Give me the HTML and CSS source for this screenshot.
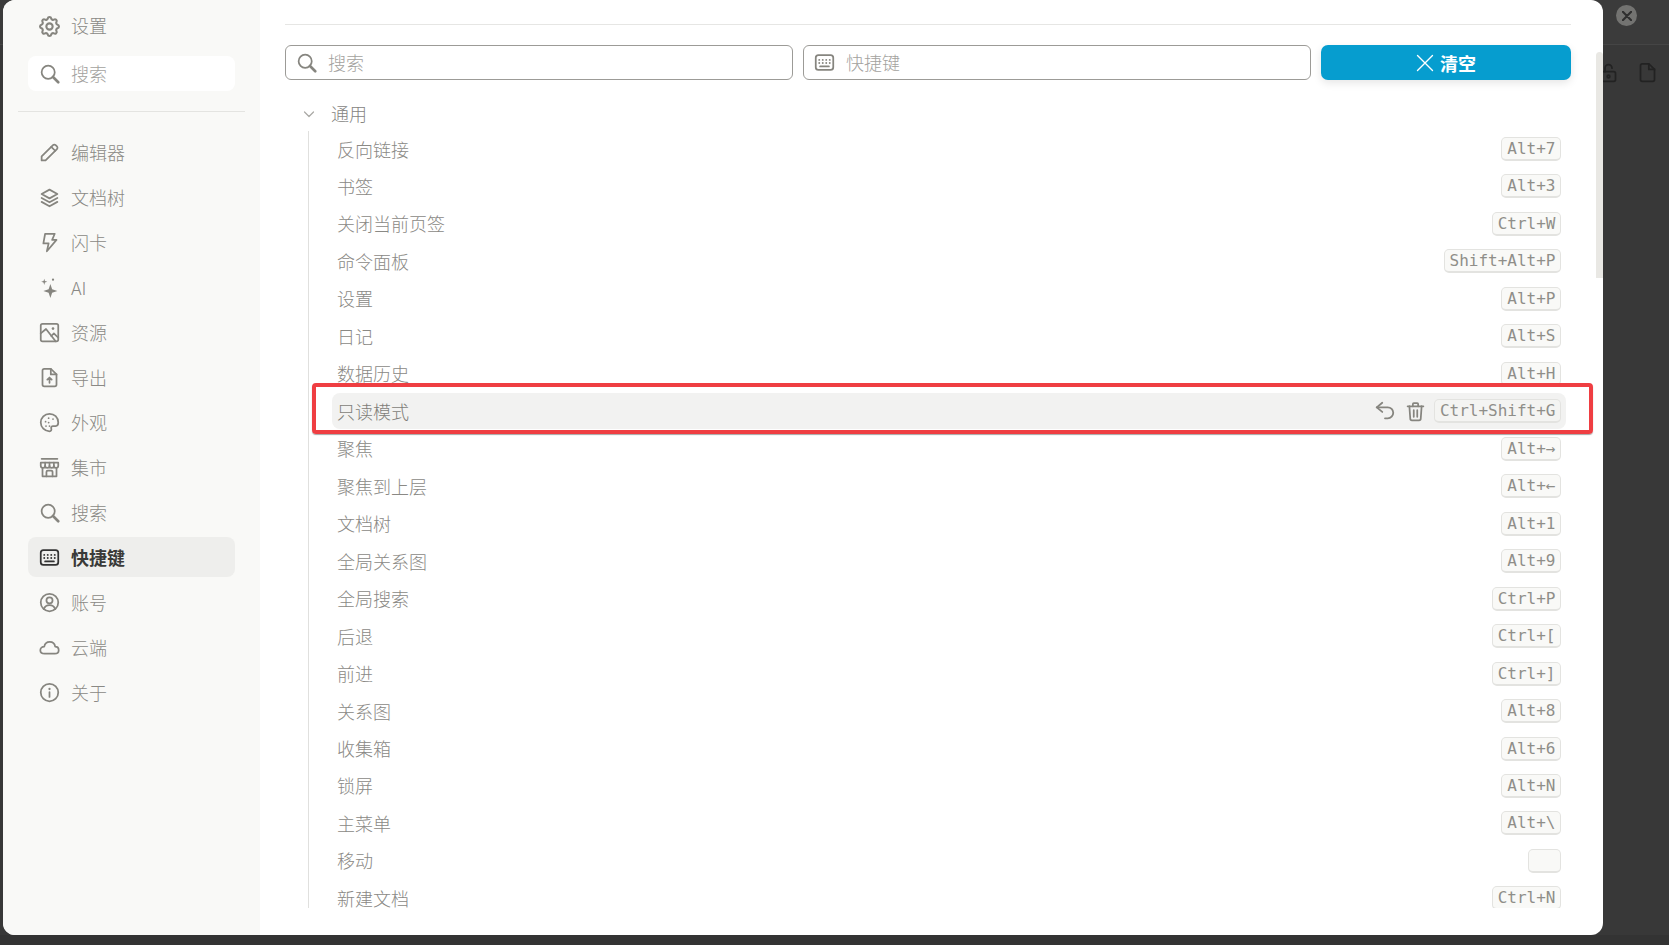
FILE: index.html
```html
<!DOCTYPE html>
<html lang="zh-CN">
<head>
<meta charset="utf-8">
<title>设置</title>
<link rel="stylesheet" href="styles.css">
</head>
<body>
<svg class="defs" width="0" height="0" aria-hidden="true">
  <symbol id="i-gear" viewBox="2 2 20 20"><path d="M10.325 4.317c.426-1.756 2.924-1.756 3.35 0a1.724 1.724 0 0 0 2.573 1.066c1.543-.94 3.31.826 2.37 2.37a1.724 1.724 0 0 0 1.065 2.572c1.756.426 1.756 2.924 0 3.35a1.724 1.724 0 0 0-1.066 2.573c.94 1.543-.826 3.31-2.37 2.37a1.724 1.724 0 0 0-2.572 1.065c-.426 1.756-2.924 1.756-3.35 0a1.724 1.724 0 0 0-2.573-1.066c-1.543.94-3.31-.826-2.37-2.37a1.724 1.724 0 0 0-1.065-2.572c-1.756-.426-1.756-2.924 0-3.35a1.724 1.724 0 0 0 1.066-2.573c-.94-1.543.826-3.31 2.37-2.37 1 .608 2.296.07 2.572-1.065z"/><circle cx="12" cy="12" r="3"/></symbol>
  <symbol id="i-search" viewBox="0 0 24 24"><circle cx="10.500" cy="10.500" r="7.500"/><path d="M16 16l6 6" stroke-width="3"/></symbol>
  <symbol id="i-pencil" viewBox="0 0 24 24"><path d="M3 21v-4.500L16 3.500a2.100 2.100 0 0 1 3 0l1.500 1.500a2.100 2.100 0 0 1 0 3L7.500 21z"/><path d="M14 5.500l4.500 4.500"/></symbol>
  <symbol id="i-layers" viewBox="0 0 24 24"><path d="M12 3L3 8l9 5 9-5z"/><path d="M3 12.500l9 5 9-5"/><path d="M3 17l9 5 9-5"/></symbol>
  <symbol id="i-bolt" viewBox="0 0 24 24"><path d="M7 2h11l-3 7h5L9 22l2-9H5z"/></symbol>
  <symbol id="i-sparkle" viewBox="0 0 24 24"><path class="solid" d="M13 8l2 6 6 2-6 2-2 6-2-6-6-2 6-2z"/><path class="solid" d="M6 2l.8 2.700L9.500 5.500 6.800 6.300 6 9l-.8-2.700L2.500 5.500l2.700-.8z"/><circle class="solid" cx="16" cy="3" r="1.300"/></symbol>
  <symbol id="i-image" viewBox="0 0 24 24"><rect x="2" y="2" width="20" height="20" rx="2"/><path d="M2 13l6-5 11 14"/><path d="M14 16l3-3 5 5"/><circle class="solid" cx="16" cy="7.500" r="1.500"/></symbol>
  <symbol id="i-export" viewBox="0 0 24 24"><path d="M13.500 2H6a2 2 0 0 0-2 2v16a2 2 0 0 0 2 2h12a2 2 0 0 0 2-2V8.500z"/><path d="M13.500 2v6.500H20"/><path d="M12 18v-6M9.500 14.500L12 12l2.500 2.500"/></symbol>
  <symbol id="i-palette" viewBox="0 0 24 24"><path d="M12 2a10 10 0 1 0 0 20c2 0 2.500-1.500 2-3-.5-1.500.5-3 2-3h3c2 0 3-1.500 3-4C22 6 17.500 2 12 2z"/><circle class="solid" cx="7.500" cy="11" r="1"/><circle class="solid" cx="11" cy="7" r="1"/><circle class="solid" cx="16" cy="8" r="1"/><circle class="solid" cx="11" cy="12" r="1"/><circle class="solid" cx="8" cy="16" r="1"/><circle class="solid" cx="12" cy="16" r="1"/></symbol>
  <symbol id="i-store" viewBox="0 0 24 24"><path d="M3 2h18"/><path d="M2 6.500h20v3.500a2.500 2.500 0 0 1-5 0 2.500 2.500 0 0 1-5 0 2.500 2.500 0 0 1-5 0 2.500 2.500 0 0 1-5 0z"/><path d="M7 6.500V10M12 6.500V10M17 6.500V10"/><path d="M4 13v9h16v-9"/><path d="M8.500 22v-5a1.500 1.500 0 0 1 1.500-1.500h4a1.500 1.500 0 0 1 1.500 1.500v5"/></symbol>
  <symbol id="i-keyboard" viewBox="0 0 24 24"><rect x="2" y="3.500" width="20" height="17" rx="3"/><path d="M6 9h.01M10 9h.01M14 9h.01M18 9h.01M6 12.500h.01M10 12.500h.01M14 12.500h.01M18 12.500h.01" stroke-width="2.200"/><path d="M7 16.500h10"/></symbol>
  <symbol id="i-user" viewBox="0 0 24 24"><circle cx="12" cy="12" r="10"/><circle cx="12" cy="9.500" r="3.500"/><path d="M5.500 19.500c1-3 3.500-4.500 6.500-4.500s5.500 1.500 6.500 4.500"/></symbol>
  <symbol id="i-cloud" viewBox="0 0 24 24"><path d="M6.500 19C3.500 19 1.500 17.200 1.500 15s2-4 4.500-4c.6-3.500 3.200-5.500 6.300-5.500 3.400 0 5.700 2.300 6.200 5.500 2.300 0 4 1.800 4 4s-1.700 4-4.500 4z"/></symbol>
  <symbol id="i-info" viewBox="0 0 24 24"><circle cx="12" cy="12" r="10"/><path d="M12 8h.01" stroke-width="2.600"/><path d="M12 11.500V17"/></symbol>
  <symbol id="i-undo" viewBox="0 0 24 24"><path d="M9 13L3 8l6-5"/><path d="M3 8h12a6 6 0 0 1 0 12h-3"/></symbol>
  <symbol id="i-trash" viewBox="0 0 24 24"><path d="M3 6h18"/><path d="M9 6V3.500a1 1 0 0 1 1-1h4a1 1 0 0 1 1 1V6"/><path d="M5 6l1 14a2 2 0 0 0 2 2h8a2 2 0 0 0 2-2l1-14"/><path d="M10 10.500v7.500M14 10.500v7.500"/></symbol>
  <symbol id="i-close" viewBox="0 0 24 24"><path d="M2 2l20 20M22 2L2 22"/></symbol>
  <symbol id="i-chevron" viewBox="0 0 24 24"><path d="M3 8l9 9 9-9"/></symbol>
  <symbol id="i-lock" viewBox="0 0 24 24"><rect x="4" y="11" width="16" height="11" rx="2"/><circle cx="12" cy="16.500" r="1.500"/><path d="M8 11V7a4 4 0 0 1 8 0"/></symbol>
  <symbol id="i-file" viewBox="0 0 24 24"><path d="M13.500 2H6a2 2 0 0 0-2 2v16a2 2 0 0 0 2 2h12a2 2 0 0 0 2-2V8.500z"/><path d="M13.500 2v6.500H20"/></symbol>
</svg>

<div class="backdrop">
  <div class="backdrop-bar">
    <span class="backdrop-close"><svg class="icon close-x"><use href="#i-close"/></svg></span>
  </div>
  <div class="backdrop-tools">
    <svg class="icon back-icon"><use href="#i-lock"/></svg>
    <svg class="icon back-icon"><use href="#i-file"/></svg>
  </div>
</div>

<main class="dialog">
  <aside class="sidebar">
    <div class="side-title"><svg class="icon"><use href="#i-gear"/></svg><span>设置</span></div>
    <div class="side-search"><svg class="icon"><use href="#i-search"/></svg><span>搜索</span></div>
    <hr class="side-divider">
    <nav class="side-nav">
      <a class="side-item"><svg class="icon"><use href="#i-pencil"/></svg><span>编辑器</span></a>
      <a class="side-item"><svg class="icon"><use href="#i-layers"/></svg><span>文档树</span></a>
      <a class="side-item"><svg class="icon"><use href="#i-bolt"/></svg><span>闪卡</span></a>
      <a class="side-item"><svg class="icon"><use href="#i-sparkle"/></svg><span>AI</span></a>
      <a class="side-item"><svg class="icon"><use href="#i-image"/></svg><span>资源</span></a>
      <a class="side-item"><svg class="icon"><use href="#i-export"/></svg><span>导出</span></a>
      <a class="side-item"><svg class="icon"><use href="#i-palette"/></svg><span>外观</span></a>
      <a class="side-item"><svg class="icon"><use href="#i-store"/></svg><span>集市</span></a>
      <a class="side-item"><svg class="icon"><use href="#i-search"/></svg><span>搜索</span></a>
      <a class="side-item active"><svg class="icon"><use href="#i-keyboard"/></svg><span>快捷键</span></a>
      <a class="side-item"><svg class="icon"><use href="#i-user"/></svg><span>账号</span></a>
      <a class="side-item"><svg class="icon"><use href="#i-cloud"/></svg><span>云端</span></a>
      <a class="side-item"><svg class="icon"><use href="#i-info"/></svg><span>关于</span></a>
    </nav>
  </aside>

  <section class="content">
    <div class="toolbar">
      <div class="field"><svg class="icon"><use href="#i-search"/></svg><span>搜索</span></div>
      <div class="field"><svg class="icon"><use href="#i-keyboard"/></svg><span>快捷键</span></div>
      <button class="clear-btn"><svg class="icon"><use href="#i-close"/></svg><span>清空</span></button>
    </div>
    <div class="list">
      <div class="group-head"><svg class="icon chevron"><use href="#i-chevron"/></svg><span>通用</span></div>
      <div class="rows">
        <div class="row"><span>反向链接</span><kbd>Alt+7</kbd></div>
        <div class="row"><span>书签</span><kbd>Alt+3</kbd></div>
        <div class="row"><span>关闭当前页签</span><kbd>Ctrl+W</kbd></div>
        <div class="row"><span>命令面板</span><kbd>Shift+Alt+P</kbd></div>
        <div class="row"><span>设置</span><kbd>Alt+P</kbd></div>
        <div class="row"><span>日记</span><kbd>Alt+S</kbd></div>
        <div class="row"><span>数据历史</span><kbd>Alt+H</kbd></div>
        <div class="row hover"><span>只读模式</span><div class="row-actions"><svg class="icon undo"><use href="#i-undo"/></svg><svg class="icon"><use href="#i-trash"/></svg></div><kbd>Ctrl+Shift+G</kbd></div>
        <div class="row"><span>聚焦</span><kbd>Alt+→</kbd></div>
        <div class="row"><span>聚焦到上层</span><kbd>Alt+←</kbd></div>
        <div class="row"><span>文档树</span><kbd>Alt+1</kbd></div>
        <div class="row"><span>全局关系图</span><kbd>Alt+9</kbd></div>
        <div class="row"><span>全局搜索</span><kbd>Ctrl+P</kbd></div>
        <div class="row"><span>后退</span><kbd>Ctrl+[</kbd></div>
        <div class="row"><span>前进</span><kbd>Ctrl+]</kbd></div>
        <div class="row"><span>关系图</span><kbd>Alt+8</kbd></div>
        <div class="row"><span>收集箱</span><kbd>Alt+6</kbd></div>
        <div class="row"><span>锁屏</span><kbd>Alt+N</kbd></div>
        <div class="row"><span>主菜单</span><kbd>Alt+\</kbd></div>
        <div class="row"><span>移动</span><kbd class="empty"></kbd></div>
        <div class="row"><span>新建文档</span><kbd>Ctrl+N</kbd></div>
      </div>
    </div>
    <div class="scrollbar"></div>
  </section>
</main>

<div class="annotation"></div>
</body>
</html>
```

FILE: styles.css
```css
* { box-sizing: border-box; }

html, body {
  margin: 0;
  height: 945px;
  overflow: hidden;
}

body {
  position: relative;
  background: #333;
  font-family: "Noto Sans CJK SC", "Noto Sans", sans-serif;
  font-size: 18px;
  font-weight: 300;
  color: #8a8985;
}

.defs { position: absolute; }

.icon {
  width: 21px;
  height: 21px;
  flex: none;
  fill: none;
  stroke: #86857f;
  stroke-width: 2;
  stroke-linecap: round;
  stroke-linejoin: round;
}

symbol .solid { fill: #86857f; stroke: none; }

/* Dark app behind the dialog */
.backdrop {
  position: absolute;
  inset: 0 0 10px 0;
  background: #383838;
}

.backdrop-bar {
  height: 45px;
  border-bottom: 1px solid #454545;
  background: #3b3b3b;
  position: relative;
}

.backdrop-close {
  position: absolute;
  left: 1616px;
  top: 5px;
  width: 21px;
  height: 21px;
  border-radius: 50%;
  background: #737371;
  display: flex;
  align-items: center;
  justify-content: center;
}

.close-x {
  width: 10px;
  height: 10px;
  stroke: #2f2f2f;
  stroke-width: 5;
}

.backdrop-tools {
  position: absolute;
  left: 1598px;
  top: 62px;
  display: flex;
  gap: 18px;
}

.back-icon { stroke: #222; }

/* Dialog */
.dialog {
  position: absolute;
  left: 3px;
  top: 0;
  width: 1600px;
  height: 935px;
  border-radius: 12px;
  overflow: hidden;
  background: #fff;
  display: flex;
}

.sidebar {
  width: 257px;
  flex: none;
  background: #f9f9f7;
  padding: 6px 15px 0;
}

.side-title,
.side-search,
.side-item {
  display: flex;
  align-items: center;
  gap: 11px;
  margin-left: 10px;
  margin-right: 10px;
  padding-left: 11px;
}

.side-title span,
.side-search span,
.field span { padding-bottom: 2px; }

.side-title { height: 40px; margin-bottom: 10px; }

.side-search {
  height: 35px;
  background: #fff;
  border-radius: 8px;
  color: #a3a29e;
}

.side-divider {
  border: 0;
  border-top: 1px solid #e4e4e1;
  margin: 20px 0;
}

.side-nav {
  display: flex;
  flex-direction: column;
  gap: 5px;
}

.side-item {
  height: 40px;
  border-radius: 8px;
}

.side-item.active {
  background: #eeeeec;
  color: #3a3a38;
  font-weight: 700;
}

.side-item.active .icon { stroke: #333; }

/* Main column */
.content {
  flex: 1;
  min-width: 0;
  padding: 24px 32px 0 25px;
  position: relative;
  display: flex;
  flex-direction: column;
}

.toolbar {
  display: grid;
  grid-template-columns: 1fr 1fr 250px;
  gap: 10px;
  border-top: 1px solid #e6e6e4;
  padding-top: 20px;
}

.field {
  height: 35px;
  display: flex;
  align-items: center;
  gap: 11px;
  padding-left: 10px;
  border: 1px solid #9c9b97;
  border-radius: 6px;
  color: #a3a29e;
}

.clear-btn {
  height: 35px;
  display: flex;
  align-items: center;
  justify-content: center;
  gap: 6px;
  border: 0;
  border-radius: 7px;
  background: #069dcf;
  color: #fff;
  font: inherit;
  font-weight: 700;
  box-shadow: 0 3px 8px rgba(0, 0, 0, .1);
  padding: 0;
}

.clear-btn .icon { width: 18px; height: 18px; stroke: #fff; stroke-width: 1.8; }

.list {
  height: 828px;
  overflow: hidden;
  position: relative;
}

.group-head {
  height: 51px;
  padding: 14px 0 0 18px;
  display: flex;
  align-items: center;
  gap: 16px;
  color: #85847f;
}

.chevron {
  width: 12px;
  height: 12px;
  margin-top: 2px;
  stroke: #a9a8a4;
  stroke-width: 2.4;
}

.rows {
  margin: 0 5px 0 23px;
  border-left: 1px solid #e0e0de;
  padding-left: 23px;
  display: flex;
  flex-direction: column;
  gap: 1.47px;
}

.row {
  height: 36px;
  flex: none;
  display: flex;
  align-items: center;
  padding: 0 5px;
  border-radius: 8px;
}

.row > span { flex: 1; padding-bottom: 1px; }

.row.hover { background: #f2f2f1; color: #7f7e79; }

.row-actions {
  display: flex;
  align-items: center;
  gap: 9px;
  margin-right: 8px;
}

.row-actions .undo { width: 22px; height: 22px; }

kbd {
  display: block;
  height: 24px;
  min-width: 33px;
  padding: 1px 4.5px 0 5px;
  border: 1px solid #e3e3e0;
  border-bottom-width: 2px;
  border-radius: 5px;
  background: #f9f9f7;
  font-family: "DejaVu Sans Mono", monospace;
  font-size: 16px;
  font-weight: 400;
  line-height: 20px;
  color: #8f8e89;
}

.row.hover kbd { background: #f4f4f2; }

.scrollbar {
  position: absolute;
  right: 0;
  top: 52px;
  width: 7px;
  height: 226px;
  border-radius: 4px 4px 0 0;
  background: #e9e8e4;
}

/* Red annotation drawn over the screenshot */
.annotation {
  position: absolute;
  left: 312px;
  top: 383px;
  width: 1281px;
  height: 51px;
  border: 4px solid #ef3e42;
  border-radius: 4px;
  box-shadow: 0 1px 1px rgba(0, 0, 0, .35);
}
```
